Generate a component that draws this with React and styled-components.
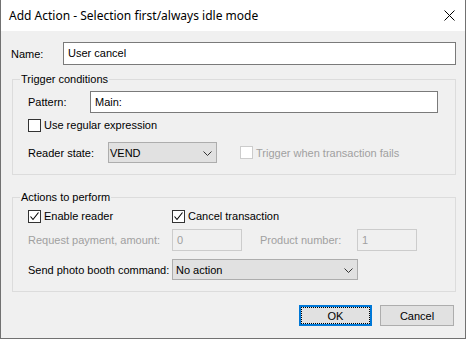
import React from 'react';
import styled, { createGlobalStyle } from 'styled-components';

const TITLE_FONT = `"Noto Sans", "Liberation Sans", sans-serif`;
const FONT = `"Liberation Sans", Arial, sans-serif`;

const GlobalStyle = createGlobalStyle`
  html, body { margin: 0; padding: 0; background: #fff; }
  body { font-family: ${FONT}; font-size: 11px; color: #000; }
  * { box-sizing: border-box; }
`;

const Window = styled.div`
  width: 466px;
  height: 339px;
  display: flex;
  flex-direction: column;
  border: 1px solid #717171;
  border-top: none;
  background: #f0f0f0;
`;

const TitleBar = styled.div`
  height: 31px;
  background: #fff;
  display: flex;
  align-items: center;
  justify-content: space-between;
  padding: 0 10px 1px 8px;
  font-family: ${TITLE_FONT};
  font-size: 12px;
`;

const Body = styled.div`
  flex: 1;
  display: flex;
  flex-direction: column;
  padding: 11px 9px 12px 10px;
`;

const Row = styled.div`
  display: flex;
  align-items: center;
  height: ${p => p.h || 22}px;
  margin-top: ${p => p.mt || 0}px;
`;

const Label = styled.span`
  width: ${p => p.w}px;
  flex: none;
  white-space: nowrap;
  color: ${p => (p.disabled ? '#a0a0a0' : '#000')};
  margin-left: ${p => p.ml || 0}px;
`;

const TextBox = styled.div`
  height: 100%;
  flex: ${p => (p.w ? 'none' : 1)};
  width: ${p => (p.w ? `${p.w}px` : 'auto')};
  border: 1px solid ${p => (p.disabled ? '#cccccc' : '#7a7a7a')};
  background: ${p => (p.disabled ? '#f0f0f0' : '#fff')};
  color: ${p => (p.disabled ? '#a0a0a0' : '#000')};
  padding: 0 4px 1px;
  display: flex;
  align-items: center;
  white-space: nowrap;
`;

const Select = styled.div`
  height: 100%;
  width: ${p => p.w}px;
  flex: none;
  border: 1px solid #adadad;
  background: #e1e1e1;
  display: flex;
  align-items: center;
  justify-content: space-between;
  padding: 1px 4px 0 ${p => p.pl || 2}px;
`;

const Group = styled.fieldset`
  margin: ${p => p.mt}px 0 0 1px;
  padding: 0;
  border: 1px solid #dcdcdc;
  min-width: 0;
`;

const Legend = styled.legend`
  margin-left: 7px;
  padding: 0 1px;
  line-height: 16px;
  height: 16px;
`;

const GroupInner = styled.div`
  padding: 0 17px 11px 15px;
`;

const Check = styled.label`
  display: flex;
  align-items: center;
  gap: 3px;
  width: ${p => (p.w ? `${p.w}px` : 'auto')};
  margin-left: ${p => p.ml || 0}px;
  color: ${p => (p.disabled ? '#a0a0a0' : '#000')};
  white-space: nowrap;
`;

const Box = styled.span`
  width: 13px;
  height: 13px;
  flex: none;
  border: 1px solid ${p => (p.disabled ? '#cccccc' : '#333333')};
  background: #fff;
  display: flex;
  align-items: center;
  justify-content: center;
`;

const Footer = styled.div`
  display: flex;
  justify-content: flex-end;
  gap: 8px;
  margin-top: 13px;
  padding-right: 2px;
`;

const Button = styled.div`
  width: ${p => p.w}px;
  height: 21px;
  display: flex;
  align-items: center;
  justify-content: center;
  background: #e1e1e1;
  border: ${p => (p.primary ? '2px solid #0078d7' : '1px solid #adadad')};
  outline: ${p => (p.primary ? '1px dotted #000' : 'none')};
  outline-offset: -3px;
`;

const Chevron = () => (
  <svg width="9" height="5" viewBox="0 0 9 5">
    <path d="M0.5 0.5 L4.5 4.5 L8.5 0.5" fill="none" stroke="#333" strokeWidth="1" />
  </svg>
);

const Tick = () => (
  <svg width="11" height="11" viewBox="0 0 11 11">
    <path d="M1.5 5.5 L4 8.5 L9.5 1.5" fill="none" stroke="#000" strokeWidth="1.1" />
  </svg>
);

const CheckBox = ({ checked, disabled, children, ...rest }) => (
  <Check disabled={disabled} {...rest}>
    <Box disabled={disabled}>{checked && <Tick />}</Box>
    {children}
  </Check>
);

const App = () => (
  <Window>
    <GlobalStyle />
    <TitleBar>
      <span>Add Action - Selection first/always idle mode</span>
      <svg width="11" height="11" viewBox="0 0 11 11">
        <path d="M0.5 0.5 L10.5 10.5 M10.5 0.5 L0.5 10.5" stroke="#000" strokeWidth="1" />
      </svg>
    </TitleBar>
    <Body>
      <Row h={23}>
        <Label w={52}>Name:</Label>
        <TextBox>User cancel</TextBox>
      </Row>

      <Group mt={6}>
        <Legend>Trigger conditions</Legend>
        <GroupInner>
          <Row mt={4}>
            <Label w={62}>Pattern:</Label>
            <TextBox>Main:</TextBox>
          </Row>
          <Row h={14} mt={5}>
            <CheckBox>Use regular expression</CheckBox>
          </Row>
          <Row h={21} mt={10}>
            <Label w={80}>Reader state:</Label>
            <Select w={109} pl={1}>
              <span>VEND</span>
              <Chevron />
            </Select>
            <CheckBox disabled ml={23}>Trigger when transaction fails</CheckBox>
          </Row>
        </GroupInner>
      </Group>

      <Group mt={14}>
        <Legend>Actions to perform</Legend>
        <GroupInner>
          <Row h={14} mt={4}>
            <CheckBox checked w={144}>Enable reader</CheckBox>
            <CheckBox checked>Cancel transaction</CheckBox>
          </Row>
          <Row mt={6}>
            <Label w={144} disabled>Request payment, amount:</Label>
            <TextBox w={70} disabled>0</TextBox>
            <Label w={97} ml={18} disabled>Product number:</Label>
            <TextBox w={60} disabled>1</TextBox>
          </Row>
          <Row h={21} mt={8}>
            <Label w={144}>Send photo booth command:</Label>
            <Select w={186} pl={3}>
              <span>No action</span>
              <Chevron />
            </Select>
          </Row>
        </GroupInner>
      </Group>

      <Footer>
        <Button primary w={73}>OK</Button>
        <Button w={74}>Cancel</Button>
      </Footer>
    </Body>
  </Window>
);

export default App;
